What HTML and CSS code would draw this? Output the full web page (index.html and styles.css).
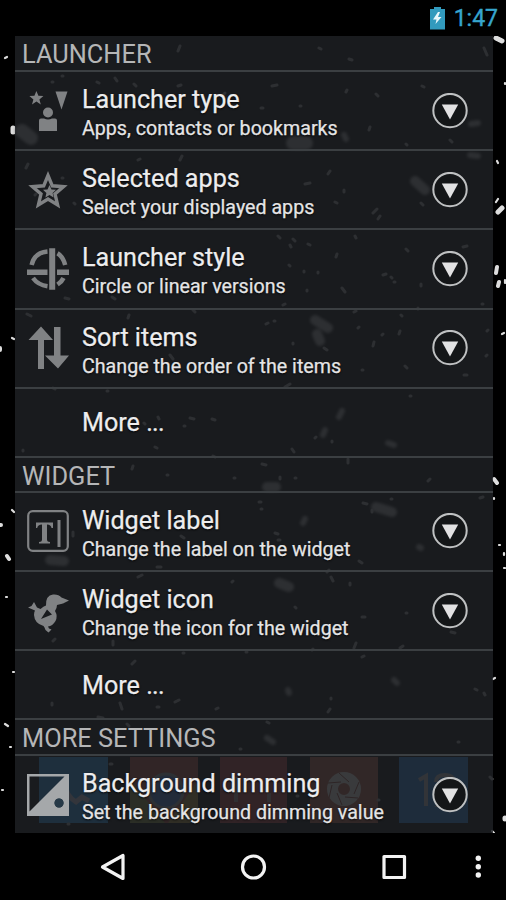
FILE: index.html
```html
<!DOCTYPE html>
<html lang="en">
<head>
<meta charset="utf-8">
<title>Settings</title>
<link rel="stylesheet" href="styles.css">
</head>
<body>
<svg class="defs" width="0" height="0">
  <symbol id="expand" viewBox="0 0 36 36">
    <circle cx="18" cy="17.600" r="16.700" fill="#141618" stroke="#bfc1c2" stroke-width="2"/>
    <path d="M9.800 11.500h16.400L18 26.500z" fill="#e2e2e3"/>
  </symbol>
</svg>
<div class="screen">
  <svg class="wallpaper" viewBox="0 0 506 900">
    <g class="apps">
      <path fill="#2075b8" d="M39 757h69v66H39z"/>
      <path fill="#8c3b32" d="M130 757h68v66h-68z"/>
      <path fill="#6a7434" d="M130 780l35 43h-35z"/>
      <path fill="#8a702e" d="M198 780v43h-30z"/>
      <circle cx="166" cy="791" r="17" fill="#3560a8" stroke="#777b80" stroke-width="3"/>
      <path fill="#8d302f" d="M220 757h67v66h-67z"/>
      <path fill="#8f4938" d="M310 757h68v66h-68z"/>
      <path fill="#2066ae" d="M399 757h69v66h-69z"/>
      <path d="M66 785q-1 10 10 17l6-5 7 4" fill="none" stroke="#99a" stroke-width="5"/>
      <path d="M236 777v25m33-9v9" stroke="#877" stroke-width="4"/>
      <circle cx="344" cy="789" r="11.5" fill="none" stroke="#bdb7b1" stroke-width="11"/>
      <path d="M339 773l10 9M359 782l-5 12M358 798l-13-1M342 805l-5-12M329 798l3-13M328 783l13-1" stroke="#793b30" stroke-width="1"/>
      <path d="M419 780l7-4v30m10-24q0-7 9-7t9 8q0 6-15 22h16" fill="none" stroke="#92959a" stroke-width="4"/>
    </g>
    <g class="edge">
      <path stroke-width="5" d="M496 38l6 3M13 128v4M498 212l4-4M505 818v1"/>
      <path stroke-width="4" d="M497 267l-1 6M499 282l-1 4M494 479l3 4M0 348v2M0 525h1M7 556l2 3"/>
      <path stroke-width="2.2" d="M5 58l2-1M497 161l1 2M496 202l2-3M505 83v1M502 334l2-1M505 280v3M5 724l3 2M12 510l2 2M10 747h1M13 672h1M2 790h1M12 338l2 1M499 545h1M504 555v-2M504 568h1M493 679l2-1M494 498v1M492 831l2 2M6 597h1"/>
    </g>
    <g class="large">
      <path stroke-width="14" d="M22 131l9 7M293 143h13"/>
      <path stroke-width="10" d="M415 181l10 9M315 320l13 8M317 334l3 7M376 507l16 5M279 583l10 4M50 560l14 1M267 487h9"/>
      <path stroke-width="6" d="M344 135l2 4M470 155l8 1M471 124l7-1M339 417l3-6M323 435l2-5M388 443l6 2M419 547l2 1M303 523l2-4M394 680l3 3M288 690l1 3M267 738l6 4"/>
    </g>
    <g class="small">
      <path stroke-width="3" d="M178 51l2-5M319 48l2 1M349 59l3 1M484 48l3 7M272 86l5-1M346 92l1-2M376 94l2 2M422 86l2 1M52 82l1 0M62 76l1 0M97 82l2 1M115 78l2 3M178 86l3-1M134 84l2 2M224 94l1-1M300 106h1M261 108h2M370 127l-1 3M450 140l2 2M406 144l1 1M26 168l2-4M138 160l2-1M182 156l-2 4M328 174l2-3M305 184l5-1M344 190v2M421 203l2 2M335 202l2 1M373 213l4-4M380 216l-2 3M62 178l1 0M35 195l1-1M74 203l1 1M278 236l2 2M293 239l2 2M290 245l1 2M308 244l2 1M336 257l1-3M355 236l1 2M406 249l2 2M463 247l4-1M304 271v1M318 272v1M289 265l1 1M383 275l3-1M391 277l1 1M394 282l1 0M307 290v1M342 288l3 4M421 286v-2M482 304l1 0M418 309v-1M283 305l2-1M65 298l4 1M112 297l3 2M27 314l4 2M128 318l1-3M193 310l2 2M354 312l2-1M401 315l1 1M266 324l2-1M274 321l1 0M359 327l-1 1M399 334l1-3M373 346l1-4M382 335l1-1M487 331l1-1M293 344v-1M324 348l3 2M486 356l1-1M405 366l2 2M464 375h3M362 370h1M170 355l3 4M285 387l5-3M53 388l2 1M107 391l1 0M190 418l4 1M212 419l3 1M158 417l1 2M144 423l1 1M332 441v1M315 438l1-1M292 449l2 3M23 450v1M155 447l2 1M410 396h1M184 426h1"/>
      <path stroke-width="3" d="M132 469l1-3M234 478h1M167 475h1M213 456l2 1M348 463v-4M262 464l4 1M280 477v2M428 481l2-2M295 478h1M259 502h2M261 509h1M363 503l4 1M372 510v2M391 499h1M480 498l3-1M275 533l3 1M278 540h2M359 561l3 2M327 572l2-2M331 577l2 4M350 583v2M181 536l3 2M73 532v4M138 577l4-2M157 567h4M232 582l1-1M295 607l1 1M362 617h3M406 613h1M451 632l4 1M354 648l2-5M400 648l3-2M312 650l1-1M113 645v-4M53 641l2-2M132 664l3-3M183 653h1M362 657l2-1M246 652h1M52 703v2M120 703l2 6M157 707h2M175 702l4-2M216 709l2-1M98 717l5 1M331 698v1M328 712l2-3M475 689l2 1M484 693l1 2M267 722l2 1M458 742h1M490 777l2 2M68 824h1M110 764h2M378 800h1M297 796h1M240 749h1M127 724l2 2"/>
    </g>
  </svg>

  <header class="status">
    <svg width="15" height="23" viewBox="0 0 15 23">
      <path d="M4 0h7v2h4v20.500H0V2h4z" fill="#329abd"/>
      <path d="M8 5L3 12.500h3.500L5.500 17l6-7H8L10 5z" fill="#e8f7fb"/>
    </svg>
    <span class="clock">1:47</span>
  </header>

  <main class="panel">
    <h2 class="section">LAUNCHER</h2>
    <div class="row">
      <svg class="icon" viewBox="0 0 48 48">
        <path d="M12.400 4l2 4.800 5 .3-4 3.300 1.400 5-4.400-2.800-4.400 2.800 1.400-5-4-3.300 5-.3zM31.500 4.500h12l-6 18z"/>
        <circle cx="24" cy="25.500" r="5"/>
        <path d="M15 33.500q0-2 2-2h3q4 2 8 0h3q2 0 2 2V44H15z"/>
      </svg>
      <div class="text"><div class="title">Launcher type</div><div class="sub">Apps, contacts or bookmarks</div></div>
      <svg class="expand"><use href="#expand"/></svg>
    </div>
    <div class="row">
      <svg class="icon" viewBox="0 0 48 48">
        <path class="line" stroke-width="3.400" d="M24 9.500l4.300 10.300 11.200.9-8.500 7.200 2.600 11-9.600-5.900-9.600 5.900 2.600-11-8.500-7.200 11.200-.9z"/>
        <path d="M25.500 19l2 4.400 4.500.4-3.400 3.100 1 4.600-4.100-2.400-4.100 2.400 1-4.600-3.400-3.100 4.500-.4z"/>
      </svg>
      <div class="text"><div class="title">Selected apps</div><div class="sub">Select your displayed apps</div></div>
      <svg class="expand"><use href="#expand"/></svg>
    </div>
    <div class="row">
      <svg class="icon" viewBox="0 0 48 48">
        <path class="line" stroke-width="4.500" d="M7.600 20Q10.500 7.500 23.500 6.500M33.500 8.300Q39 11.500 41.200 20M9 33Q14 40 23.500 41.200M33.500 39.500Q38 36.500 39.500 33"/>
        <path d="M25.200 3.200h6v41.600h-6zM3 24.500h20.500V30H3zM33 24.500h12V30H33z"/>
      </svg>
      <div class="text"><div class="title">Launcher style</div><div class="sub">Circle or linear versions</div></div>
      <svg class="expand"><use href="#expand"/></svg>
    </div>
    <div class="row">
      <svg class="icon" viewBox="0 0 48 48">
        <path d="M17 2.500l12 13.500h-9v29h-6V16H4.500zM30 3h6.500v28.500H45L34 44.500 21 31.500h9z"/>
      </svg>
      <div class="text"><div class="title">Sort items</div><div class="sub">Change the order of the items</div></div>
      <svg class="expand"><use href="#expand"/></svg>
    </div>
    <div class="row more"><div class="title">More <span class="dots">...</span></div></div>

    <h2 class="section mid">WIDGET</h2>
    <div class="row">
      <svg class="icon" viewBox="0 0 48 48">
        <rect class="line" stroke-width="2.200" x="4.200" y="4.200" width="39.600" height="39.600" rx="4.500"/>
        <path d="M12 15.500h17v5.500h-1.500q-.5-3.500-4.500-3.500v15q0 2.500 3 2.500v1.500H15V35q3 0 3-2.500v-15q-4.300 0-4.800 3.500H12zM33.500 13h3v27h-3z"/>
      </svg>
      <div class="text"><div class="title">Widget label</div><div class="sub">Change the label on the widget</div></div>
      <svg class="expand"><use href="#expand"/></svg>
    </div>
    <div class="row">
      <svg class="icon" viewBox="0 0 48 48">
        <path fill-rule="evenodd" d="M10 15l3 5.500 3.500 1.500q3-3 5.500-3.500-.5-10 7-11 5.500-.5 8.500 3l7.500 3-6 3-6 1.500q0 3-2 6 3 5 .5 10-3 5-7.500 5.500l1 2 2.500 1-3 3-3-2.500q-1-3-2-4-9-2.500-9.500-11 0-3 1-4.500L4 20.500l3.500-1.500zM23 22.500l-6 9.500 11-4.500z"/>
      </svg>
      <div class="text"><div class="title">Widget icon</div><div class="sub">Change the icon for the widget</div></div>
      <svg class="expand"><use href="#expand"/></svg>
    </div>
    <div class="row more"><div class="title">More <span class="dots">...</span></div></div>

    <h2 class="section">MORE SETTINGS</h2>
    <div class="row last">
      <svg class="icon light" viewBox="0 0 48 48">
        <path fill-rule="evenodd" d="M3 3h42v42H3zM5.500 5.500v35L40.500 5.500zM35 27.500a4.500 4.500 0 1 0 .1 0z"/>
        <circle cx="35" cy="32" r="4.500" fill="#263947"/>
      </svg>
      <div class="text"><div class="title">Background dimming</div><div class="sub">Set the background dimming value</div></div>
      <svg class="expand"><use href="#expand"/></svg>
    </div>
  </main>

  <nav class="nav">
    <svg viewBox="0 0 506 67" fill="none" stroke="#f3f3f3" stroke-width="3.200" stroke-linejoin="round">
      <path d="M102.500 34l20.500-11.500v23z"/>
      <circle cx="253.500" cy="34" r="11"/>
      <rect x="384" y="23.500" width="20.500" height="21"/>
      <g fill="#f3f3f3" stroke="none"><circle cx="478.300" cy="25.300" r="2.700"/><circle cx="478.300" cy="33.700" r="2.700"/><circle cx="478.300" cy="42" r="2.700"/></g>
    </svg>
  </nav>
</div>
</body>
</html>
```
FILE: styles.css
```css
* { box-sizing: border-box; }
body { margin: 0; background: #000; font-family: Roboto, sans-serif; }
.defs { position: absolute; }
.screen {
  position: relative;
  width: 506px;
  height: 900px;
  overflow: hidden;
  display: flex;
  flex-direction: column;
}
.wallpaper { position: absolute; inset: 0; width: 506px; height: 900px; }
.wallpaper g:not(.apps) { fill: none; stroke-linecap: round; }
.edge { stroke: #ddd; }
.large { stroke: #777; filter: blur(1.8px); }
.small { stroke: #777; filter: blur(0.6px); }
.status {
  position: relative;
  height: 36px;
  flex: none;
  display: flex;
  justify-content: flex-end;
  align-items: center;
  gap: 9px;
  padding-right: 8px;
  background: #000;
}
.clock {
  font-size: 23px;
  line-height: 36px;
  padding-top: 1px;
  color: #36a5cd;
  -webkit-text-stroke: 0.4px #36a5cd;
}
.panel {
  position: relative;
  width: 478px;
  height: 797px;
  margin-left: 15px;
  flex: none;
  background: rgba(30, 33, 36, 0.83);
}
.section {
  height: 36px;
  margin: 0;
  padding-left: 7px;
  border-bottom: 2px solid #3b3f42;
  font-size: 25.4px;
  font-weight: 400;
  line-height: 36px;
  color: #b5b6b7;
}
.section.mid { height: 35px; }
.row {
  height: 79.2px;
  display: flex;
  align-items: center;
  padding: 0 25px 0 9px;
  border-bottom: 2px solid #3b3f42;
}
.row.more { height: 69px; padding: 1px 0 0 67px; }
.row.last { height: 77px; border-bottom: 0; }
.icon { width: 48px; height: 48px; flex: none; fill: #808284; }
.icon.light { fill: #a5a8aa; }
.icon .line { fill: none; stroke: #808284; }
.text { flex: 1; margin-left: 10px; padding-top: 6px; white-space: nowrap; }
.title {
  font-size: 25.15px;
  line-height: 31px;
  color: #ededee;
  text-shadow: 0 1px 2px #000;
  -webkit-text-stroke: 0.25px #ededee;
}
.dots { letter-spacing: -0.7px; }
.sub {
  font-size: 19.65px;
  line-height: 28px;
  color: #e5e5e6;
  text-shadow: 0 1px 2px #000;
  -webkit-text-stroke: 0.25px #e5e5e6;
}
.expand { width: 36px; height: 36px; flex: none; }
.nav { position: relative; height: 67px; background: #000; }
.nav svg { display: block; width: 506px; height: 67px; }
```
